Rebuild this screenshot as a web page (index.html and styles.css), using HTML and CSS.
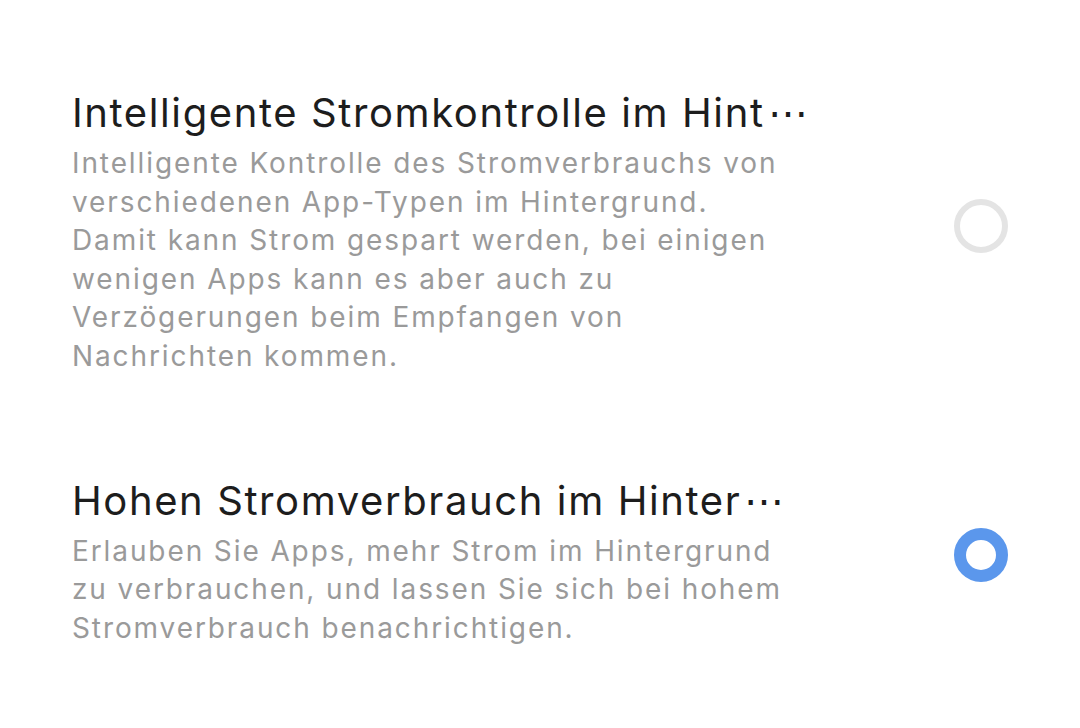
FILE: index.html
```html
<!DOCTYPE html>
<html lang="de">
<head>
  <meta charset="UTF-8">
  <meta name="viewport" content="width=device-width, initial-scale=1.0">
  <title>Akkuverbrauch im Hintergrund</title>
  <link rel="stylesheet" href="styles.css">
</head>
<body>
  <div class="option-list">
    <div class="option">
      <div class="option-text">
        <div class="option-title">Intelligente Stromkontrolle im Hint<span class="more">⋯</span></div>
        <div class="option-desc">Intelligente Kontrolle des Stromverbrauchs von verschiedenen App-Typen im Hintergrund. Damit kann Strom gespart werden, bei einigen wenigen Apps kann es aber auch zu Verzögerungen beim Empfangen von Nachrichten kommen.</div>
      </div>
      <span class="radio"></span>
    </div>

    <div class="option">
      <div class="option-text">
        <div class="option-title">Hohen Stromverbrauch im Hinter<span class="more">⋯</span></div>
        <div class="option-desc">Erlauben Sie Apps, mehr Strom im Hintergrund zu verbrauchen, und lassen Sie sich bei hohem Stromverbrauch benachrichtigen.</div>
      </div>
      <span class="radio checked"></span>
    </div>
  </div>
</body>
</html>
```

FILE: styles.css
```css
body {
  margin: 0;
  background-color: #fff;
  font-family: Inter, Roboto, sans-serif;
}
.option-list {
  padding-top: 38px;
}
.option {
  display: flex;
  align-items: center;
  padding: 50px 72px;
}
.option-text {
  flex: 1;
  min-width: 0;
  max-width: 722px;
}
.option-title {
  font-size: 40px;
  line-height: 50px;
  color: #1d1d1d;
  letter-spacing: 1.6px;
  white-space: nowrap;
  margin-bottom: 6px;
}
.option-title .more {
  margin-left: 3px;
  letter-spacing: 0;
}
.option-desc {
  font-size: 28px;
  line-height: 38.6px;
  letter-spacing: 1.9px;
  color: #9a9a9a;
}
.radio {
  margin-left: auto;
  margin-bottom: 12px;
  width: 54px;
  height: 54px;
  box-sizing: border-box;
  border-radius: 50%;
  border: 6px solid #e4e4e4;
  flex-shrink: 0;
}
.radio.checked {
  border: 12px solid #5b97ec;
}
```
